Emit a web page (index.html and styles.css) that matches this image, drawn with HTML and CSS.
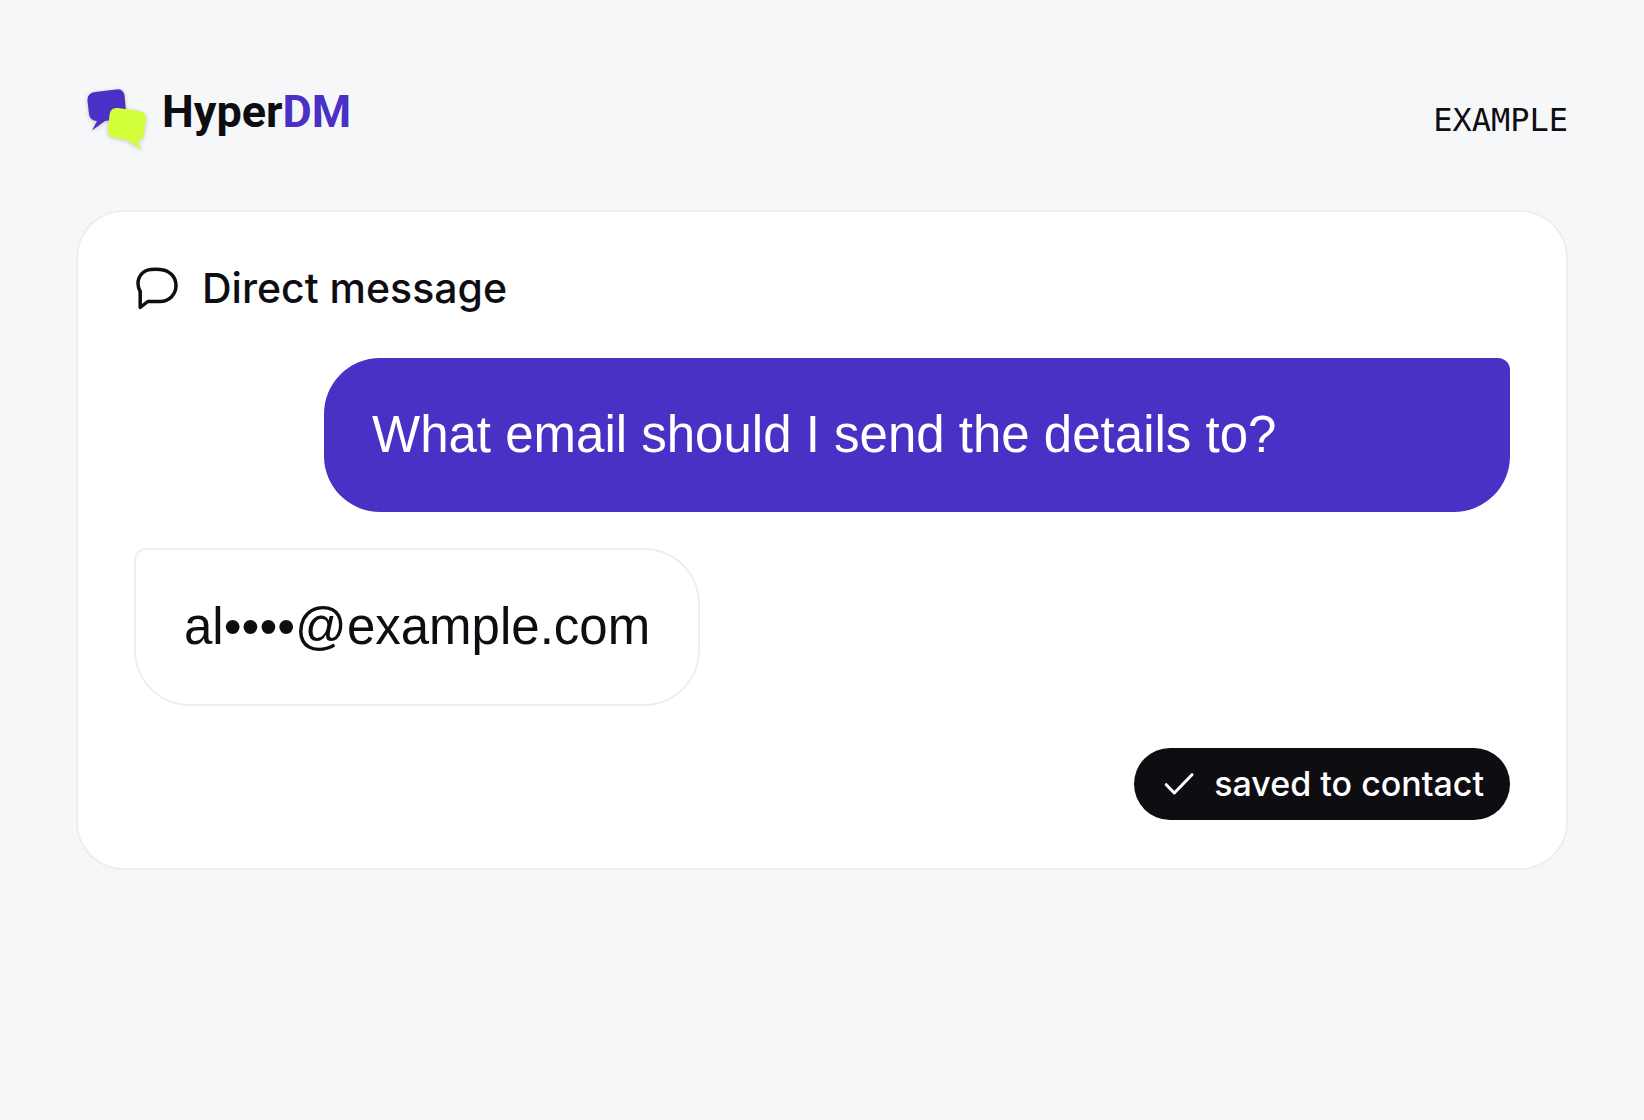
FILE: index.html
```
<!DOCTYPE html>
<html lang="en">
<head>
  <meta charset="UTF-8">
  <meta name="viewport" content="width=device-width, initial-scale=1.0">
  <title>HyperDM - Direct message</title>
  <link rel="stylesheet" href="styles.css">
</head>
<body>
  <header class="header">
    <div class="logo">
      <svg class="logo-mark" viewBox="0 0 80 80" aria-hidden="true">
        <path fill="#4a30c5" d="M15 12 L36 9.500 Q43 8.500 44.500 15 L46 32 Q47 38 40 39 L25 41 L12 50.500 L17 41 Q10 41 9 34 L7.500 21 Q7 13 15 12Z"/>
        <path fill="#d2ff3a" d="M38 28 L59 31 Q66 32 66 39 L64 54 Q63 60 57 60.500 L62 70 L47 60 L34 57.500 Q27 56.500 28 49 L29.500 35 Q30.500 27 38 28Z"/>
      </svg>
      <div class="logo-text">Hyper<span>DM</span></div>
    </div>
    <div class="tag">EXAMPLE</div>
  </header>

  <main class="card">
    <h1 class="card-title">
      <svg class="title-icon" viewBox="0 0 48 48" aria-hidden="true">
        <path d="M17 5.500C9.500 6 4 12 4 19.500C4 23 5 25.500 6.200 27.500V43.500L13.800 37.500H26C35 37.500 42 30.500 42 21.800C42 12.500 35 6 26 5.500Q21 5.200 17 5.500Z"/>
      </svg>
      Direct message
    </h1>

    <div class="messages">
      <p class="bubble bubble-out">What email should I send the details to?</p>
      <p class="bubble bubble-in">al••••@example.com</p>
    </div>

    <div class="status">
      <svg class="status-icon" viewBox="0 0 36 36" aria-hidden="true">
        <path d="M6.300 18.700L14.300 27L32 8.700"/>
      </svg>
      saved to contact
    </div>
  </main>
</body>
</html>
```
FILE: styles.css
```
* {
  box-sizing: border-box;
}

body {
  margin: 0;
  padding: 80px 76px;
  background-color: #f6f7f9;
  color: #0e0d12;
  font-family: Inter, "Liberation Sans", sans-serif;
}

.header {
  display: flex;
  justify-content: space-between;
  align-items: center;
  height: 80px;
  margin-bottom: 50px;
}

.logo {
  display: flex;
  align-items: flex-start;
  gap: 2px;
  padding-left: 4px;
}

.logo-mark {
  width: 80px;
  height: 80px;
  filter: drop-shadow(0 1px 2px rgba(0, 0, 0, 0.2));
}

.logo-text {
  font-family: Roboto, sans-serif;
  font-size: 45px;
  font-weight: 700;
  line-height: 64px;
}

.logo-text span {
  color: #4a30c5;
}

.tag {
  font-family: "DejaVu Sans Mono", monospace;
  font-size: 32px;
}

.card {
  display: flex;
  flex-direction: column;
  padding: 48px 56px;
  background-color: #fff;
  border: 2px solid #eee;
  border-radius: 48px;
}

.card-title {
  display: flex;
  align-items: center;
  gap: 20px;
  margin: 0 0 42px;
  font-size: 41px;
  font-weight: 500;
  line-height: 56px;
}

.title-icon {
  width: 48px;
  height: 48px;
}

.title-icon path,
.status-icon path {
  fill: none;
  stroke: currentColor;
  stroke-width: 3.5;
  stroke-linecap: round;
  stroke-linejoin: round;
}

.messages {
  display: flex;
  flex-direction: column;
  gap: 36px;
}

.bubble {
  margin: 0;
  padding: 40px 48px;
  border-radius: 56px;
  font-family: "Liberation Sans", Arial, sans-serif;
  font-size: 51px;
  line-height: 74px;
}

.bubble-out {
  margin-left: 190px;
  background-color: #4a30c5;
  color: #fff;
  border-top-right-radius: 12px;
}

.bubble-in {
  align-self: flex-start;
  border: 2px solid #eee;
  border-top-left-radius: 12px;
}

.status {
  display: flex;
  align-self: flex-end;
  align-items: center;
  gap: 18px;
  margin-top: 42px;
  padding: 0 26px;
  border-radius: 36px;
  background-color: #0e0d12;
  color: #fff;
  font-size: 34px;
  font-weight: 500;
  line-height: 72px;
}

.status-icon {
  width: 36px;
  height: 36px;
}

.status-icon path {
  stroke-width: 3;
}
```
